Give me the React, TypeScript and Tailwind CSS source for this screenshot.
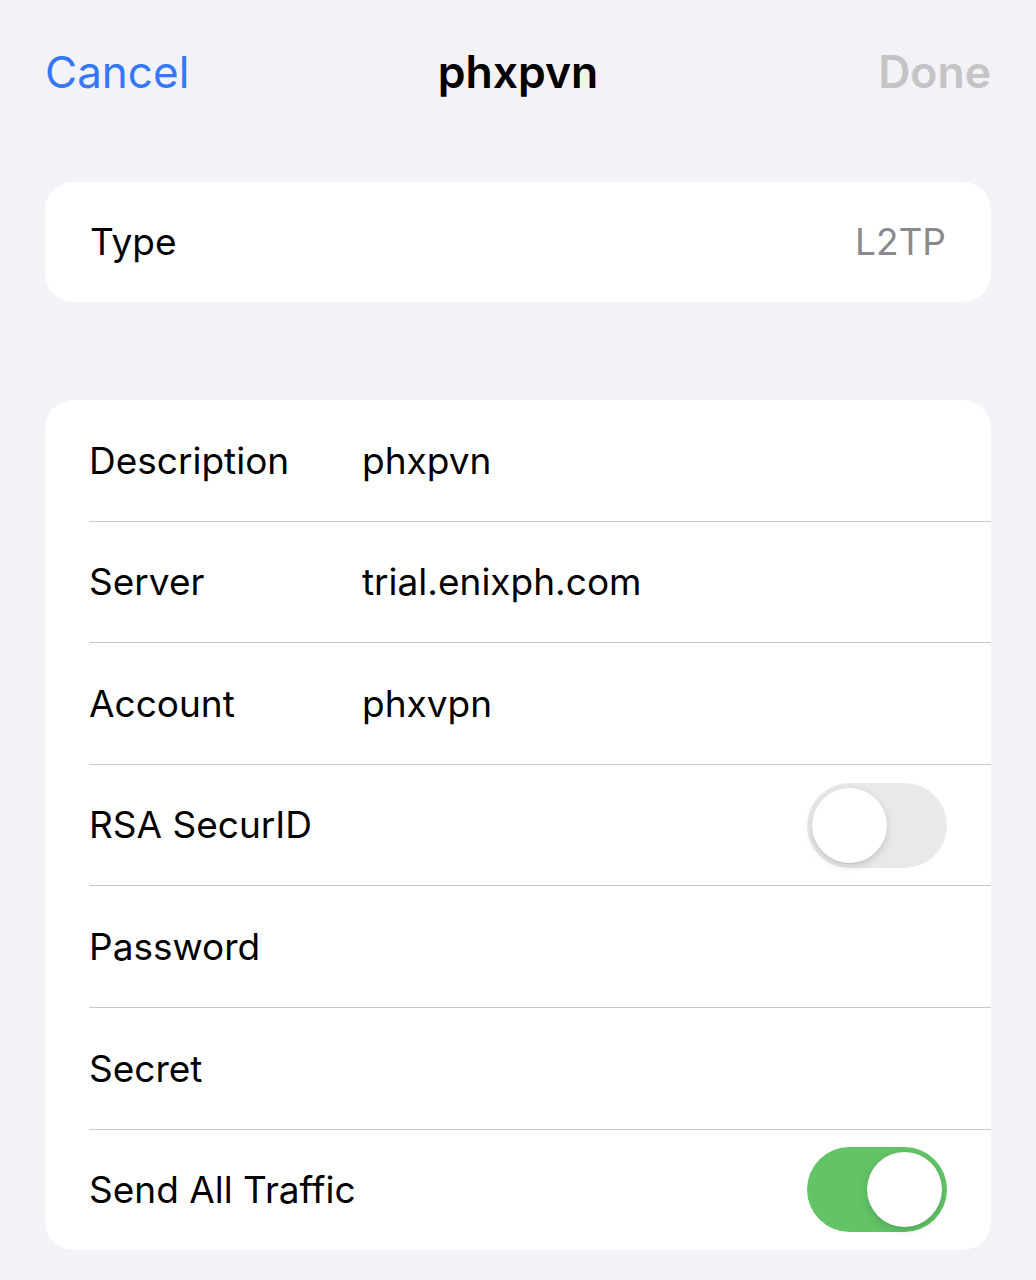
import React from "react";

type Row = {
  label: string;
  value?: string;
  toggle?: boolean;
};

const rows: Row[] = [
  { label: "Description", value: "phxpvn" },
  { label: "Server", value: "trial.enixph.com" },
  { label: "Account", value: "phxvpn" },
  { label: "RSA SecurID", toggle: false },
  { label: "Password" },
  { label: "Secret" },
  { label: "Send All Traffic", toggle: true },
];

function Toggle({ on }: { on: boolean }) {
  return (
    <div
      className={`flex h-[85px] w-[140px] items-center rounded-full p-[5px] ${
        on ? "justify-end bg-[#62c466]" : "justify-start bg-[#e9e9eb]"
      }`}
    >
      <div className="h-[75px] w-[75px] rounded-full bg-white shadow-[0_3px_8px_rgba(0,0,0,0.15),0_1px_1px_rgba(0,0,0,0.06)]" />
    </div>
  );
}

export default function App() {
  return (
    <div className="min-h-[1280px] w-full bg-[#f2f2f7] px-[45px] font-['Inter',sans-serif] text-black">
      <header className="grid h-[182px] grid-cols-[1fr_auto_1fr] items-start pt-[46px]">
        <span className="text-[44px] leading-[52px] text-[#3478f6]">Cancel</span>
        <span className="text-[44.5px] font-semibold leading-[52px]">phxpvn</span>
        <span className="text-right text-[44.5px] font-semibold leading-[52px] text-[#c4c4c6]">Done</span>
      </header>

      <section className="flex h-[120px] items-center justify-between rounded-[28px] bg-white px-[45px]">
        <span className="text-[37px]">Type</span>
        <span className="text-[37px] text-[#8a8a8e]">L2TP</span>
      </section>

      <section className="mt-[98px] overflow-hidden rounded-[28px] bg-white">
        {rows.map((row, i) => (
          <div key={row.label}>
            {i > 0 && <div className="ml-[44px] h-px bg-[#c8c7cc]" />}
            <div className="flex h-[120.6px] items-center pl-[44px] pr-[44px]">
              <span className="w-[273px] shrink-0 text-[37px]">{row.label}</span>
              <span className="flex-1 text-[37px]">{row.value}</span>
              {row.toggle !== undefined && <Toggle on={row.toggle} />}
            </div>
          </div>
        ))}
      </section>
    </div>
  );
}
